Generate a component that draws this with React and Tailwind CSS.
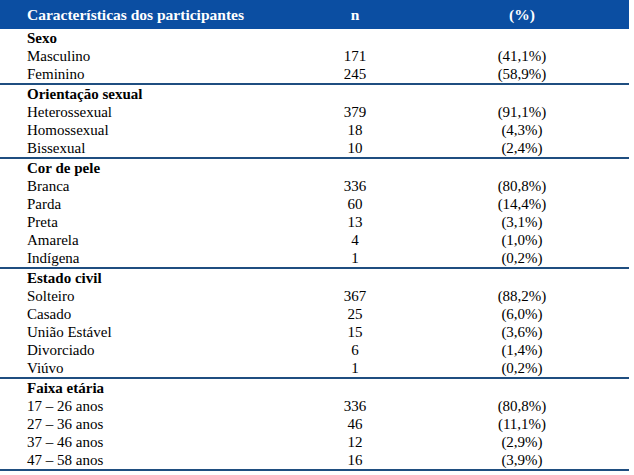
import React from "react";

const groups = [
  {
    title: "Sexo",
    rows: [
      ["Masculino", "171", "(41,1%)"],
      ["Feminino", "245", "(58,9%)"],
    ],
  },
  {
    title: "Orientação sexual",
    rows: [
      ["Heterossexual", "379", "(91,1%)"],
      ["Homossexual", "18", "(4,3%)"],
      ["Bissexual", "10", "(2,4%)"],
    ],
  },
  {
    title: "Cor de pele",
    rows: [
      ["Branca", "336", "(80,8%)"],
      ["Parda", "60", "(14,4%)"],
      ["Preta", "13", "(3,1%)"],
      ["Amarela", "4", "(1,0%)"],
      ["Indígena", "1", "(0,2%)"],
    ],
  },
  {
    title: "Estado civil",
    rows: [
      ["Solteiro", "367", "(88,2%)"],
      ["Casado", "25", "(6,0%)"],
      ["União Estável", "15", "(3,6%)"],
      ["Divorciado", "6", "(1,4%)"],
      ["Viúvo", "1", "(0,2%)"],
    ],
  },
  {
    title: "Faixa etária",
    rows: [
      ["17 – 26 anos", "336", "(80,8%)"],
      ["27 – 36 anos", "46", "(11,1%)"],
      ["37 – 46 anos", "12", "(2,9%)"],
      ["47 – 58 anos", "16", "(3,9%)"],
    ],
  },
];

const Row = ({ label, n, pct, bold }) => (
  <div className="grid grid-cols-[295px_120px_214px] h-[18px] leading-[18px]">
    <span className={"pl-[27px] " + (bold ? "font-bold" : "")}>{label}</span>
    <span className="text-center">{n}</span>
    <span className="text-center">{pct}</span>
  </div>
);

const App = () => {
  return (
    <div className="w-[634px] h-[475px] bg-white text-black text-[15px] [font-family:'Liberation_Serif','Times_New_Roman',serif]">
      <div className="w-[629px]">
        <div className="grid grid-cols-[295px_120px_214px] h-[29px] items-center bg-[#0b4ea2] text-white font-bold text-[15.5px]">
          <span className="pl-[27px]">Características dos participantes</span>
          <span className="text-center">n</span>
          <span className="text-center">(%)</span>
        </div>
        {groups.map((g) => (
          <div key={g.title} className="border-b-2 border-[#1f4e80]">
            <Row label={g.title} bold />
            {g.rows.map((r) => (
              <Row key={r[0]} label={r[0]} n={r[1]} pct={r[2]} />
            ))}
          </div>
        ))}
      </div>
    </div>
  );
};

export default App;
